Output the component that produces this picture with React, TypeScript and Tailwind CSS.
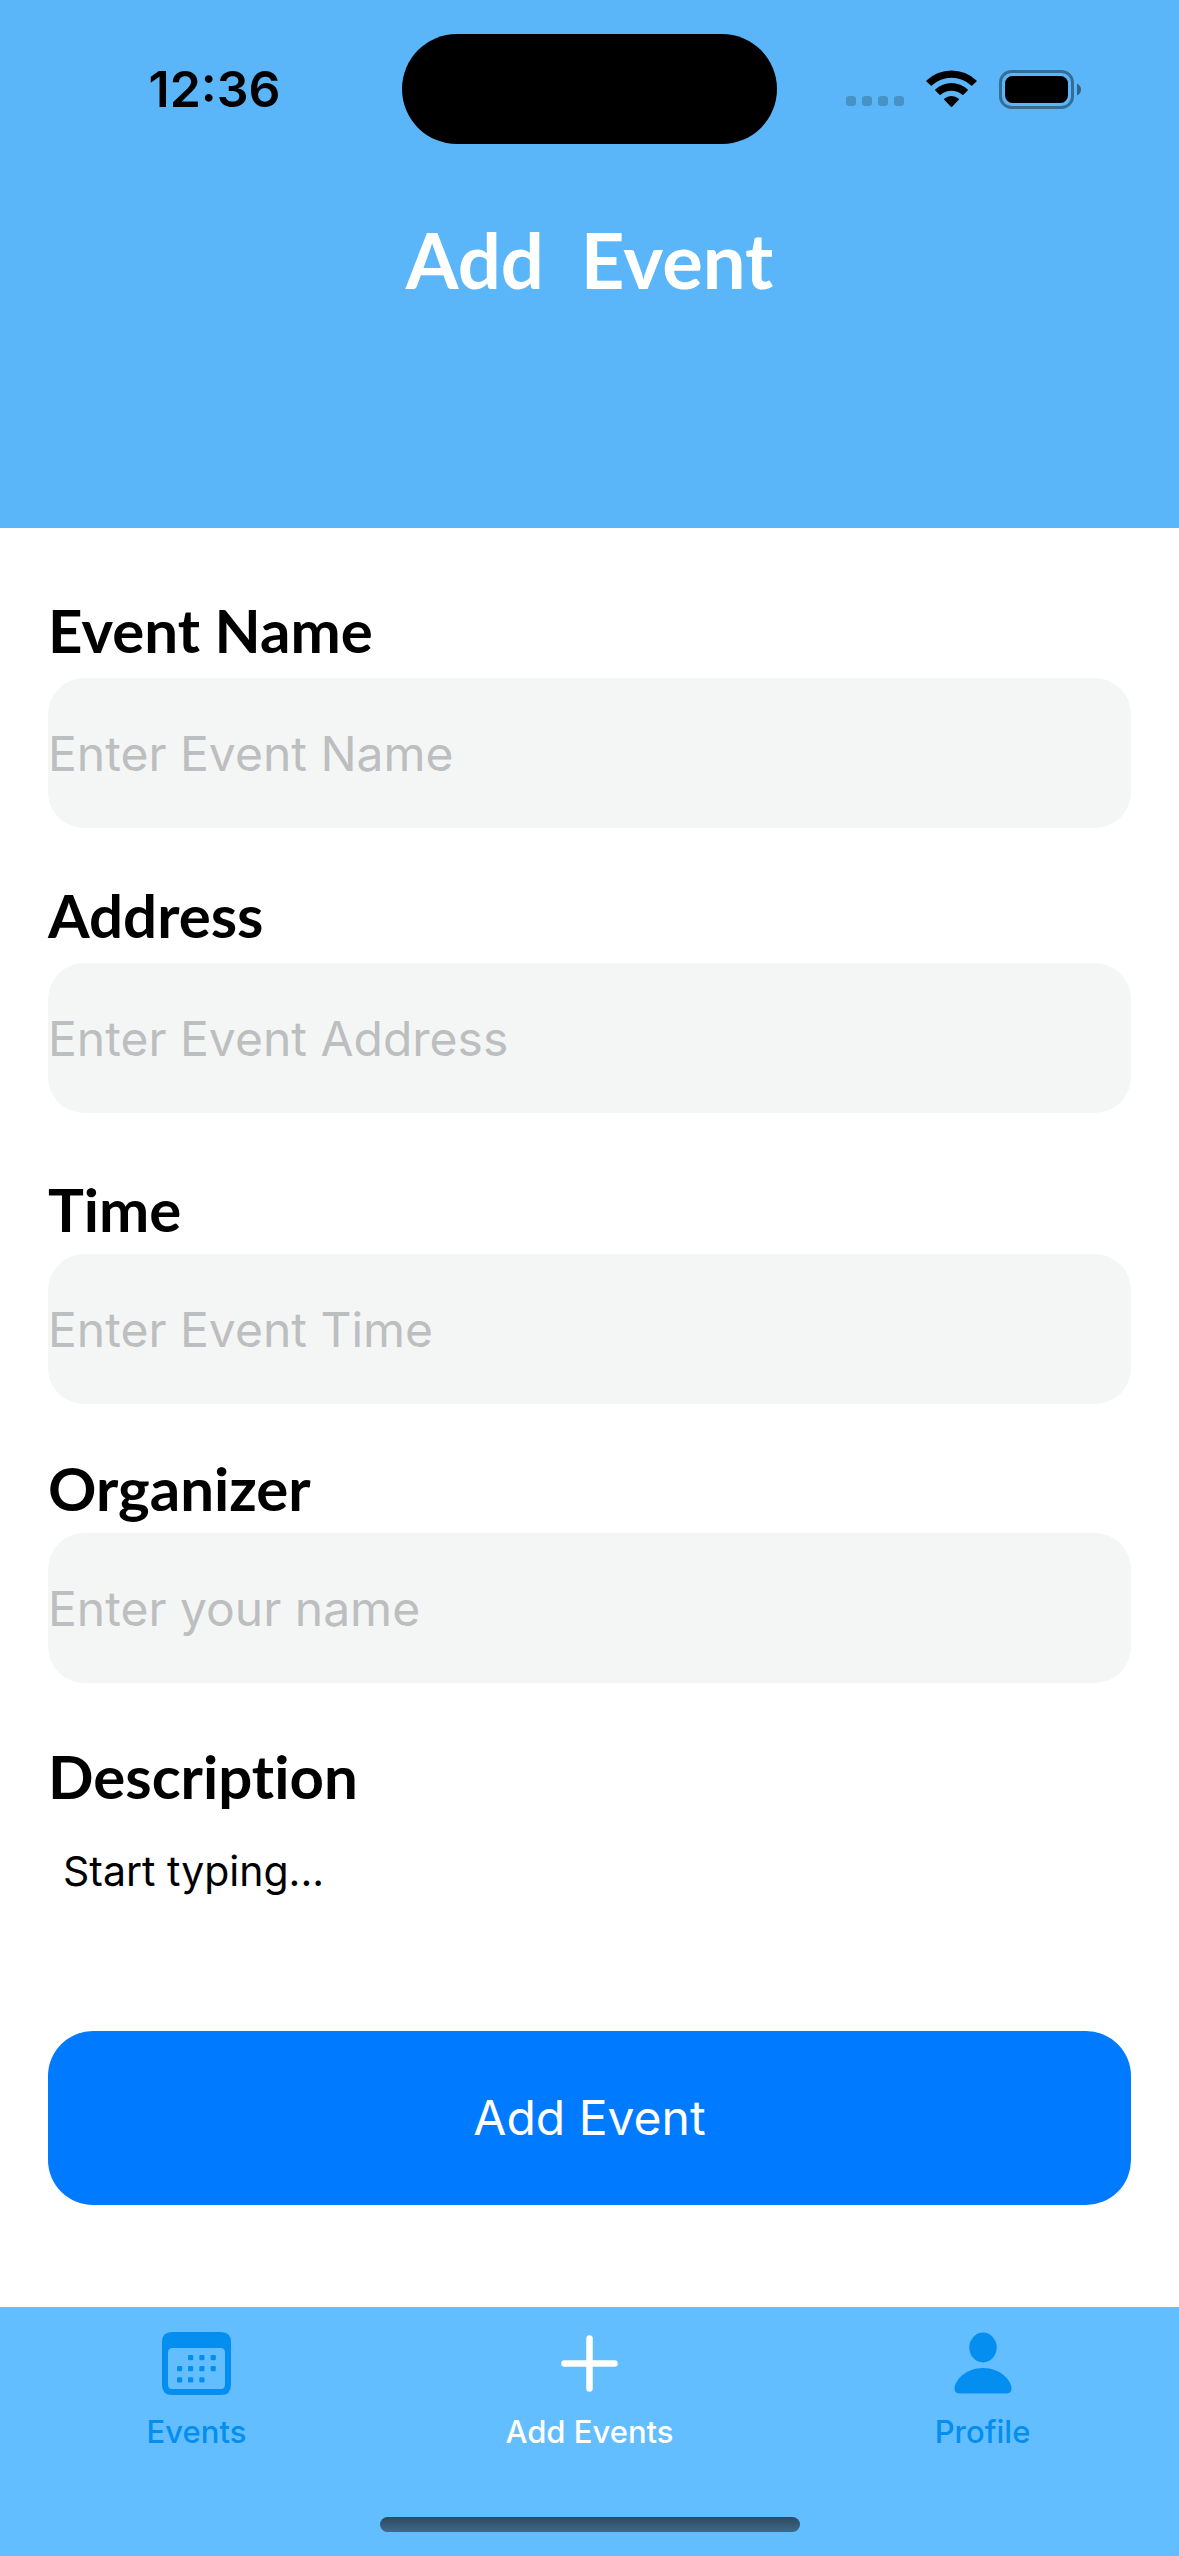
import type { ReactNode } from "react";

const FIELDS = [
  { id: "event-name", label: "Event Name", placeholder: "Enter Event Name", space: "mt-[66px]", gap: "mb-3" },
  { id: "address", label: "Address", placeholder: "Enter Event Address", space: "mt-[51px]", gap: "mb-3" },
  { id: "time", label: "Time", placeholder: "Enter Event Time", space: "mt-[60px]", gap: "mb-[9px]" },
  { id: "organizer", label: "Organizer", placeholder: "Enter your name", space: "mt-[48px]", gap: "mb-[9px]" },
];

const LABEL =
  "block font-['Lato',sans-serif] text-[60px] leading-[72px] font-bold text-black [font-variant-ligatures:none]";

function WifiIcon() {
  return (
    <svg viewBox="0 0 51 38" className="h-[38px] w-[51px]" fill="currentColor" aria-hidden>
      <path d="M0.5 10.5 A36 36 0 0 1 50.5 10.5 Q51 11 50.5 11.6 L46.3 15.6 Q45.8 16 45.2 15.5 A29 29 0 0 0 5.8 15.5 Q5.2 16 4.7 15.6 L0.5 11.6 Q0 11 0.5 10.5 Z" />
      <path d="M9.3 19.5 A23.5 23.5 0 0 1 41.7 19.5 Q42.2 20.1 41.7 20.6 L37.4 24.7 Q36.9 25.1 36.3 24.7 A16.5 16.5 0 0 0 14.7 24.7 Q14.1 25.1 13.6 24.7 L9.3 20.6 Q8.8 20.1 9.3 19.5 Z" />
      <path d="M18.2 28.7 A11.5 11.5 0 0 1 32.8 28.7 Q33.4 29.2 32.8 29.8 L26.1 36.8 Q25.5 37.4 24.9 36.8 L18.2 29.8 Q17.6 29.2 18.2 28.7 Z" />
    </svg>
  );
}

function BatteryIcon() {
  return (
    <svg viewBox="0 0 82 39" className="h-[39px] w-[82px]" aria-hidden>
      <rect x="1.5" y="1.5" width="72" height="36" rx="11" fill="none" stroke="black" strokeOpacity="0.4" strokeWidth="3" />
      <rect x="6" y="6" width="63" height="27" rx="7.5" fill="black" />
      <path d="M78 13.5 Q82 15.5 82 19.5 Q82 23.5 78 25.5 Z" fill="black" fillOpacity="0.45" />
    </svg>
  );
}

function CalendarIcon() {
  const dots = [
    [26, 23], [37.3, 23], [48.6, 23],
    [15, 34], [26, 34], [37.3, 34], [48.6, 34],
    [15, 45.3], [26, 45.3], [37.3, 45.3],
  ];
  return (
    <svg viewBox="0 0 69 63" className="h-[63px] w-[69px]" fill="currentColor" aria-hidden>
      <path
        fillRule="evenodd"
        d="M10 0 H59 Q69 0 69 10 V53 Q69 63 59 63 H10 Q0 63 0 53 V10 Q0 0 10 0 Z M10.5 16 Q6 16 6 20.5 V52.5 Q6 57 10.5 57 H58.5 Q63 57 63 52.5 V20.5 Q63 16 58.5 16 Z"
      />
      {dots.map(([x, y]) => (
        <rect key={`${x}-${y}`} x={x} y={y} width="5.2" height="5.2" rx="1.2" />
      ))}
    </svg>
  );
}

function PlusIcon() {
  return (
    <svg
      viewBox="0 0 57 57"
      className="h-[57px] w-[57px]"
      fill="none"
      stroke="currentColor"
      strokeWidth="6.5"
      strokeLinecap="round"
      aria-hidden
    >
      <path d="M28.5 3.5 V53.5 M3.5 28.5 H53.5" />
    </svg>
  );
}

function PersonIcon() {
  return (
    <svg viewBox="0 0 58 62" className="h-[62px] w-[58px]" fill="currentColor" aria-hidden>
      <ellipse cx="29" cy="15.5" rx="13.7" ry="15" />
      <path d="M6 61.5 Q0.5 61.5 0.5 56.5 C0.5 49 11 36 29 36 C47 36 57.5 49 57.5 56.5 Q57.5 61.5 52 61.5 Z" />
    </svg>
  );
}

function Tab({ label, icon, active = false }: { label: string; icon: ReactNode; active?: boolean }) {
  return (
    <a
      href="#"
      aria-current={active ? "page" : undefined}
      className={`flex flex-1 flex-col items-center ${active ? "text-white" : "text-[#048eef]"}`}
    >
      <span className="flex h-[62px] items-center">{icon}</span>
      <span className="mt-[18px] text-[31px] leading-[40px] font-medium">{label}</span>
    </a>
  );
}

export default function App() {
  return (
    <div className="flex min-h-screen flex-col bg-white font-['Inter',sans-serif]">
      <header className="h-[528px] bg-[#5ab6f9]">
        <div className="grid grid-cols-3 items-center pt-[34px]">
          <time className="pl-[36px] text-center text-[50px] leading-[60px] font-semibold text-black">12:36</time>
          <div className="h-[110px] w-[375px] justify-self-center rounded-full bg-black" />
          <div className="flex items-center justify-end gap-[22px] pr-[98px] text-black">
            <div className="flex gap-[6px] pt-6">
              {[0, 1, 2, 3].map((i) => (
                <span key={i} className="size-[10px] rounded-[3px] bg-black/20" />
              ))}
            </div>
            <WifiIcon />
            <BatteryIcon />
          </div>
        </div>
        <h1 className="mt-[72px] text-center font-['Lato',sans-serif] text-[76px] leading-[88px] font-bold whitespace-pre text-white">
          {"Add  Event"}
        </h1>
      </header>

      <form className="flex flex-1 flex-col px-[48px]" onSubmit={(e) => e.preventDefault()}>
        {FIELDS.map(({ id, label, placeholder, space, gap }) => (
          <div key={id} className={space}>
            <label htmlFor={id} className={`${LABEL} ${gap}`}>
              {label}
            </label>
            <input
              id={id}
              type="text"
              placeholder={placeholder}
              className="block h-[150px] w-full rounded-[36px] bg-[#f4f6f6] text-[48px] text-black outline-none placeholder:text-[#bdbebf]"
            />
          </div>
        ))}

        <label htmlFor="description" className={`${LABEL} mt-[57px]`}>
          Description
        </label>
        <textarea
          id="description"
          defaultValue="Start typing..."
          className="mt-[33px] block h-[124px] w-full resize-none px-[15px] text-[41px] leading-[52px] text-black outline-none"
        />

        <button
          type="submit"
          className="mt-[62px] h-[174px] w-full rounded-[45px] bg-[#007aff] text-[48px] text-white"
        >
          Add Event
        </button>
      </form>

      <nav className="flex h-[249px] flex-col justify-between bg-[#63beff] pt-[25px] pb-[24px]">
        <div className="flex">
          <Tab label="Events" icon={<CalendarIcon />} />
          <Tab label="Add Events" icon={<PlusIcon />} active />
          <Tab label="Profile" icon={<PersonIcon />} />
        </div>
        <div className="h-[15px] w-[420px] self-center rounded-full bg-linear-to-b from-[#2d4a60] to-[#3d6a8b]" />
      </nav>
    </div>
  );
}
